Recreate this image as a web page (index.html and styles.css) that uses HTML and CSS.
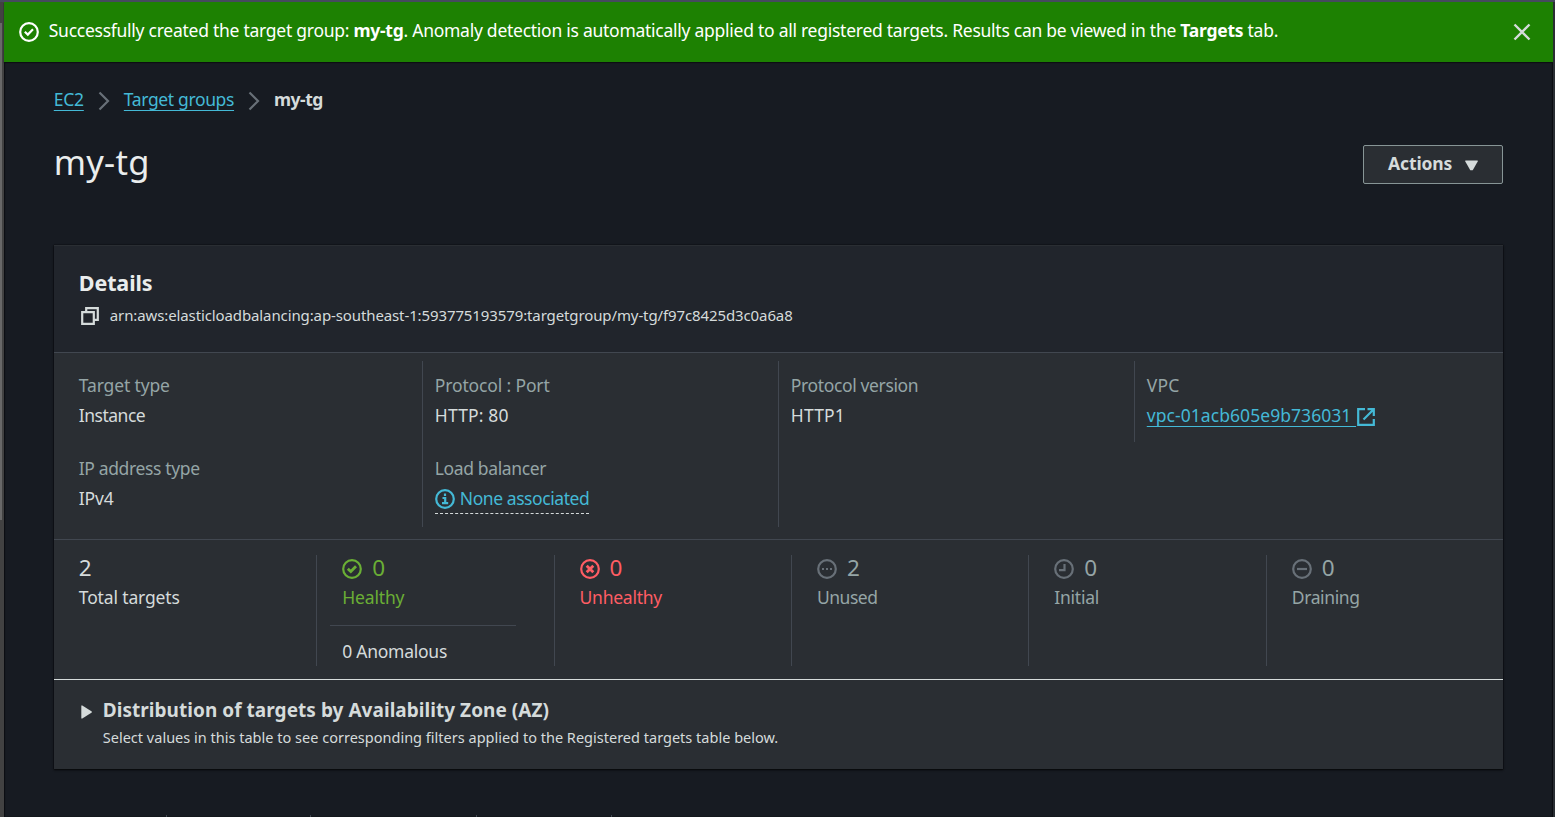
FILE: index.html
```html
<!DOCTYPE html>
<html lang="en">
<head>
<meta charset="utf-8">
<title>my-tg | Target groups</title>
<link rel="stylesheet" href="styles.css">
</head>
<body>
<div class="shell">
  <aside class="rail"><div class="rail-thumb"></div></aside>
  <main class="page">
    <div class="flash">
      <svg class="icon" viewBox="0 0 20 20"><circle cx="10" cy="10" r="8.8"/><path d="M5.8 9.8l3 2.800 5.200-5.300"/></svg>
      <p class="flash-text">Successfully created the target group: <b>my-tg</b>. Anomaly detection is automatically applied to all registered targets. Results can be viewed in the <b>Targets</b> tab.</p>
      <svg class="close" viewBox="0 0 18 18"><path d="M1.500 1.500l15 15M16.500 1.500l-15 15"/></svg>
    </div>
    <nav class="crumbs">
      <a class="link">EC2</a>
      <svg class="chev" viewBox="0 0 12 20"><path d="M1.500 1.500l8.500 8.500-8.500 8.500"/></svg>
      <a class="link tight">Target groups</a>
      <svg class="chev" viewBox="0 0 12 20"><path d="M1.500 1.500l8.500 8.500-8.500 8.500"/></svg>
      <b class="tighter">my-tg</b>
    </nav>
    <header class="title-row">
      <h1>my-tg</h1>
      <button class="actions"><span>Actions</span><svg class="caret" viewBox="0 0 13 11"><path d="M.3.500h12.400v1L7.700 10.300H5.300L.3 1.500z"/></svg></button>
    </header>
    <section class="card">
      <div class="card-head">
        <h2>Details</h2>
        <div class="arn"><svg class="copy" viewBox="0 0 18 18"><path d="M1.200 5.200h11.600v11.600H1.200zM5.200 5V1.200h11.600v11.600H13"/></svg><span>arn:aws:elasticloadbalancing:ap-southeast-1:593775193579:targetgroup/my-tg/f97c8425d3c0a6a8</span></div>
      </div>
      <div class="info">
        <div class="col"><dl><dt class="loose">Target type</dt><dd class="tighter">Instance</dd></dl><dl><dt class="tight">IP address type</dt><dd class="loose">IPv4</dd></dl></div>
        <div class="col"><dl><dt class="loose">Protocol : Port</dt><dd class="wide">HTTP: 80</dd></dl><dl><dt class="tight">Load balancer</dt><dd class="none"><svg class="icon" viewBox="0 0 20 20"><circle cx="10" cy="10" r="8.800"/><path d="M10 4.500v2.400M7.500 9h2.700v5M7 14.200h6.200"/></svg><span>None associated</span></dd></dl></div>
        <div class="col"><dl><dt class="tight">Protocol version</dt><dd class="wide">HTTP1</dd></dl></div>
        <div class="col"><dl><dt class="wide">VPC</dt><dd class="vpc"><a class="link">vpc-01acb605e9b736031 </a><svg class="ext" viewBox="0 0 18 18"><path d="M8 1.200H1.200v15.600h15.600V11M10.500 1.200h6.300V8M16.500 1.500L6.500 11.500"/></svg></dd></dl></div>
      </div>
      <div class="stats">
        <div class="stat"><div class="num">2</div><div class="lab loose">Total targets</div></div>
        <div class="stat ok"><div class="num"><svg class="icon" viewBox="0 0 20 20"><circle cx="10" cy="10" r="8.800"/><path class="bold" d="M5.800 9.800l3 2.800 5.200-5.300"/></svg>0</div><div class="lab loose">Healthy</div><div class="anom">0 Anomalous</div></div>
        <div class="stat bad"><div class="num"><svg class="icon" viewBox="0 0 20 20"><circle cx="10" cy="10" r="8.800"/><path class="bold" d="M6.700 6.700l6.600 6.600M13.300 6.700l-6.600 6.600"/></svg>0</div><div class="lab">Unhealthy</div></div>
        <div class="stat off"><div class="num"><svg class="icon" viewBox="0 0 20 20"><circle cx="10" cy="10" r="8.800"/><path d="M5 10h2M9 10h2M13 10h2"/></svg>2</div><div class="lab tighter">Unused</div></div>
        <div class="stat off"><div class="num"><svg class="icon" viewBox="0 0 20 20"><circle cx="10" cy="10" r="8.800"/><path d="M10.500 5v6.200H5"/></svg>0</div><div class="lab">Initial</div></div>
        <div class="stat off"><div class="num"><svg class="icon" viewBox="0 0 20 20"><circle cx="10" cy="10" r="8.800"/><path d="M5 10h10"/></svg>0</div><div class="lab tight">Draining</div></div>
      </div>
      <div class="dist">
        <svg class="tri" viewBox="0 0 11 14"><path d="M.300.500v13h1L10.800 7.500v-1L1.300.500z"/></svg>
        <div><h3>Distribution of targets by Availability Zone (AZ)</h3><p>Select values in this table to see corresponding filters applied to the Registered targets table below.</p></div>
      </div>
    </section>
    <div class="ticks"><i></i><i></i><i></i><i></i></div>
  </main>
  <aside class="edge"></aside>
</div>
</body>
</html>
```
FILE: styles.css
```css
* { box-sizing: border-box; }
body { margin: 0; height: 817px; overflow: hidden; background: #171b22; color: #d5dbdb; font: 17.5px/24px "Noto Sans", "Open Sans", sans-serif; letter-spacing: -.25px; }
h1, h2, h3, p, dl, dd { margin: 0; }
svg { fill: none; stroke: currentColor; stroke-width: 2.2; flex: none; display: block; }
.bold { stroke-width: 2.8; }
.loose { letter-spacing: -.14px; }
.tight { letter-spacing: -.36px; }
.tighter { letter-spacing: -.49px; }
.wide { letter-spacing: .16px; }
.shell { display: flex; height: 817px; border-top: 2px solid #454a5e; }
.rail { width: 4px; background: #424242; padding-top: 21px; }
.rail-thumb { width: 2px; height: 497px; background: #686868; }
.edge { width: 2px; background: #2a2e33; }
.page { flex: 1; display: flex; flex-direction: column; white-space: nowrap; box-shadow: inset 1px 0 1px #0c0e12, inset -1px 0 1px #0c0e12; }
.flash { height: 60px; background: #1d8102; color: #fff; display: flex; align-items: center; padding: 0 22px 0 15px; box-shadow: 0 1px 1px #0c0e12; }
.icon { width: 20px; height: 20px; }
.flash-text { margin: 0 0 4px 10px; flex: 1; letter-spacing: -.262px; }
.close { width: 18px; height: 18px; color: #d5dbdb; stroke-width: 2.4; }
.crumbs { display: flex; align-items: center; height: 24px; margin: 25px 50px 0; }
.link { color: #44b9d6; text-decoration: underline; text-underline-offset: 4px; text-decoration-thickness: 1px; }
.chev { width: 12px; height: 20px; color: #687078; margin: 4px 14px 0; }
.title-row { display: flex; justify-content: space-between; margin: 33px 50px 0; height: 40px; }
h1 { font-weight: 400; font-size: 34.5px; line-height: 36px; letter-spacing: .25px; color: #eaeded; }
.actions { margin: 1px 0 0; width: 140px; height: 39px; background: #2a2e33; border: 1px solid #879596; border-radius: 2px; color: #d5dbdb; font: bold 17.5px/24px "Noto Sans", sans-serif; letter-spacing: -.15px; display: flex; align-items: center; padding: 0 23px 3px 24px; gap: 13px; }
.caret { width: 13px; height: 11px; margin-top: 4px; fill: currentColor; stroke: none; }
.card { margin: 61px 50px 0; height: 524px; background: #2a2e33; box-shadow: 0 1px 2px #050608, 0 0 1px #000; }
.card-head { height: 108px; background: #21252c; border-top: 1px solid #2a2e33; border-bottom: 1px solid #414750; padding: 23px 25px 0; }
h2 { font-size: 21.5px; line-height: 28px; letter-spacing: -.1px; color: #eaeded; }
.arn { display: flex; align-items: center; font-size: 15px; line-height: 24px; letter-spacing: -.112px; margin: 6px 0 0 2px; }
.copy { width: 18px; height: 18px; margin: 1px 11px 0 0; }
.info { display: grid; grid-template-columns: repeat(4, 356px); align-items: start; height: 187px; padding: 8px 12px 0; border-bottom: 1px solid #414750; }
.col { padding: 11px 0 0 13px; height: 166px; }
.col + .col { border-left: 1px solid #414750; padding-left: 12px; }
.col:last-child { height: 81px; }
.col dl { height: 83px; }
dt { color: #95a5a6; line-height: 26px; }
dd { line-height: 34px; display: flex; }
.none { color: #44b9d6; width: max-content; height: 33px; line-height: 32px; align-items: center; gap: 5px; border-bottom: 1px dashed #d5dbdb; letter-spacing: -.43px; }
.none .icon { margin-top: 3px; }
.none span { padding-top: 1px; }
.vpc { align-items: center; gap: 1px; white-space: pre; letter-spacing: .06px; }
.ext { color: #44b9d6; width: 18px; height: 18px; margin-top: 4px; }
.stats { display: grid; grid-template-columns: repeat(6, 237.4px); padding: 15px 0 0 25px; height: 140px; border-bottom: 1px solid #d5dbdb; }
.stat { height: 111px; padding-left: 25px; }
.stat:first-child { padding-left: 0; }
.stat + .stat { border-left: 1px solid #414750; }
.num { display: flex; align-items: center; gap: 10px; font-size: 22.5px; line-height: 24px; height: 28px; padding-bottom: 3px; }
.num .icon { margin-top: 3px; }
.lab { line-height: 28px; }
.ok { color: #6aaf35; }
.bad { color: #ff5d64; }
.off { color: #95a5a6; }
.off svg { color: #687078; }
.anom { margin: 14px 38px 0 -12px; padding: 13px 12px 0; border-top: 1px solid #414750; color: #d5dbdb; }
.dist { display: flex; padding: 17px 27px; gap: 11px; }
.tri { width: 11px; height: 14px; margin-top: 8px; fill: currentColor; stroke: none; }
h3 { font-size: 19px; line-height: 26px; letter-spacing: .04px; }
.dist p { font-size: 14.5px; line-height: 28px; letter-spacing: .01px; }
.ticks { margin-top: auto; display: flex; height: 2px; padding-left: 162px; }
.ticks i { width: 1px; background: #414750; }
.ticks i:nth-child(2) { margin-left: 143px; }
.ticks i:nth-child(3) { margin-left: 165px; }
.ticks i:nth-child(4) { margin-left: 134px; }
```
